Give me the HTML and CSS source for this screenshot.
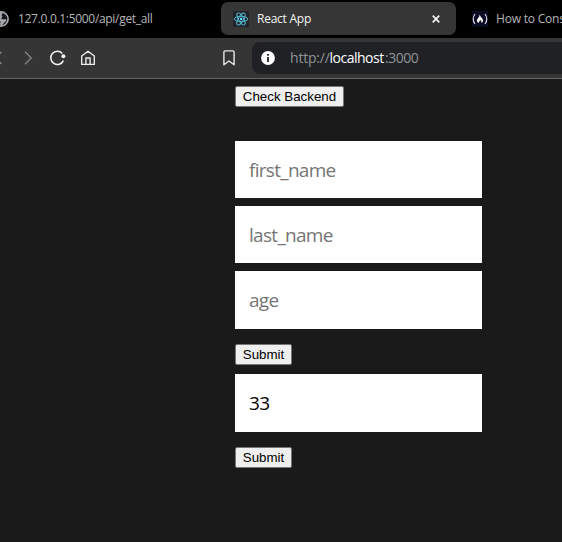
FILE: index.html
```html
<!DOCTYPE html>
<html lang="en">
<head>
<meta charset="utf-8">
<title>React App</title>
<link rel="stylesheet" href="styles.css">
</head>
<body>
<div class="tabs">
  <div class="tab tab-left">
    <svg class="globe" width="16" height="16" viewBox="0 0 16 16"><circle cx="8" cy="8" r="7.1" fill="#151719" stroke="#a4a8ad" stroke-width="1.7"/><path d="M1 5L5 1L10 1.5L8.5 4L9.5 5.5L8 7.5L10.5 8.5L12.5 8L13.5 9.5L11 12L8.5 14.5L6.5 13L8 11L5 9.5L1 8Z" fill="#a4a8ad"/></svg>
    <span class="title-api">127.0.0.1:5000/api/get_all</span>
  </div>
  <div class="tab tab-active">
    <svg width="16" height="16" viewBox="0 0 16 16"><rect width="16" height="16" rx="1" fill="#20242a"/><g fill="none" stroke="#55b9d3" stroke-width=".95"><ellipse cx="8" cy="8" rx="6.8" ry="2.6"/><ellipse cx="8" cy="8" rx="6.8" ry="2.6" transform="rotate(60 8 8)"/><ellipse cx="8" cy="8" rx="6.8" ry="2.6" transform="rotate(120 8 8)"/></g><circle cx="8" cy="8" r="1.3" fill="#61dafb"/></svg>
    <span class="title-react">React App</span>
    <svg class="close" width="8" height="8" viewBox="0 0 8 8"><path d="M.7.7L7.3 7.3M7.3.7L.7 7.3" stroke="#f4f4f4" stroke-width="1.7"/></svg>
  </div>
  <div class="tab tab-right">
    <svg width="16" height="16" viewBox="0 0 16 16"><rect width="16" height="16" fill="#0a0a23"/><path d="M3 3Q-.6 8 3 13M13 3Q16.6 8 13 13" fill="none" stroke="#d4d4dc" stroke-width="1.2"/><path d="M7.5 3C8 6 11 7 11 9.7C11 11 10.2 11.8 9.2 12C9.8 11 9.5 10.2 8.4 9C8 10 6.3 10.5 7 12C4 11.2 4.7 8.8 6 7.3C7 6 7.7 5 7.5 3Z" fill="#fff"/></svg>
    <span class="title-how">How to Cons</span>
  </div>
</div>
<div class="toolbar">
  <svg class="nav" width="110" height="40" viewBox="0 0 110 40" fill="none"><path d="M1.5 14L-4.5 20L1.5 26" stroke="#858585" stroke-width="1.3"/><path d="M25 13.7L31.3 20L25 26.3" stroke="#858585" stroke-width="1.3"/><path d="M62.3 15.4A6.6 6.6 0 1 0 63.4 22.6" stroke="#f5f5f5" stroke-width="1.5"/><circle cx="63.4" cy="18.3" r="2" fill="#f5f5f5"/><path d="M81.7 18L88 13.3L94.3 18V26.4H81.7ZM85.9 26V20H90.1V26" stroke="#f0f0f0" stroke-width="1.35" stroke-linejoin="round"/></svg>
  <svg class="bookmark" width="12" height="16" viewBox="0 0 12 16"><path d="M.9 2.2Q.9.9 2.2.9H9.8Q11.1.9 11.1 2.2V14.8L6 11L.9 14.8Z" fill="none" stroke="#e8e8e8" stroke-width="1.4" stroke-linejoin="round"/></svg>
  <div class="address">
    <svg width="14" height="14" viewBox="0 0 14 14"><circle cx="7" cy="7" r="6.9" fill="#fff"/><path d="M6 3H8V4.8H6ZM6 6H8V11H6Z" fill="#33353a"/></svg>
    <div class="url"><span class="scheme">http://</span><span class="host">localhost</span><span class="port">:3000</span></div>
  </div>
</div>
<main>
  <button class="check">Check Backend</button>
  <form class="person">
    <input type="text" placeholder="first_name">
    <input type="text" placeholder="last_name">
    <input class="tall" type="text" placeholder="age">
    <button type="button">Submit</button>
  </form>
  <form class="lookup">
    <input class="tall" type="text" value="33">
    <button type="button">Submit</button>
  </form>
</main>
</body>
</html>
```
FILE: styles.css
```css
* { box-sizing: border-box; }
body {
  margin: 0;
  width: 562px;
  height: 542px;
  overflow: hidden;
  background: #1a1a1a;
  font-family: "Open Sans", "Noto Sans", sans-serif;
}
svg { display: block; flex: none; }
.tabs {
  display: flex;
  height: 38px;
  padding-top: 2px;
  background: #000;
  overflow: hidden;
}
.tab {
  display: flex;
  flex: none;
  align-items: center;
  height: 33px;
  font-size: 12px;
  line-height: 16px;
  white-space: nowrap;
  color: #b5b5b5;
}
.tab-left { width: 221px; }
.globe { margin: 1px 11px 0 -7px; }
.globe + span { margin-left: -2px; }
.tab-active {
  width: 235px;
  padding: 0 16px 0 12px;
  border-radius: 7px;
  background: #363636;
  color: #f5f5f5;
}
.tab-active span { margin-left: 8px; }
.close { margin-left: auto; }
.tab-right { padding-left: 16px; }
.tab-right span { margin-left: 8px; }
.title-api { letter-spacing: -0.31px; }
.title-react { letter-spacing: -0.25px; }
.title-how { letter-spacing: -0.2px; }
.toolbar {
  display: flex;
  align-items: center;
  height: 41px;
  background: #353535;
  border-bottom: 1px solid #666;
}
.bookmark { margin: 0 17px 0 113px; }
.address {
  display: flex;
  align-items: center;
  flex: 1;
  height: 32px;
  padding-left: 9px;
  border-radius: 8px 0 0 8px;
  background: #202125;
}
.url {
  margin-left: 15px;
  font-size: 14px;
  line-height: 20px;
  color: #919396;
}
.url span { display: inline-block; }
.scheme { width: 39.5px; letter-spacing: -0.2px; }
.host { width: 55.5px; letter-spacing: -0.5px; color: #fff; }
.port { letter-spacing: -0.5px; }
main { padding: 7px 0 0 235px; }
button {
  display: block;
  width: 57px;
  height: 21px;
  padding: 0;
  border: 1px solid #767676;
  border-radius: 2px;
  background: #efefef;
  color: #000;
  font: 13.333px/17px "Liberation Sans", Arial, sans-serif;
}
.check { width: 109px; }
form { display: flex; flex-direction: column; }
.person { margin-top: 34px; }
.lookup { margin-top: 9px; }
input {
  display: block;
  width: 247px;
  height: 57px;
  margin: 0 0 8px;
  padding: 0 14px 0;
  border: 0;
  border-radius: 0;
  outline: 0;
  background: #fff;
  color: #000;
  font: 19px "Open Sans", "Noto Sans", sans-serif;
  letter-spacing: -0.7px;
}
input::placeholder { color: #757575; opacity: 1; }
input.tall { height: 58px; margin-bottom: 15px; }
```
